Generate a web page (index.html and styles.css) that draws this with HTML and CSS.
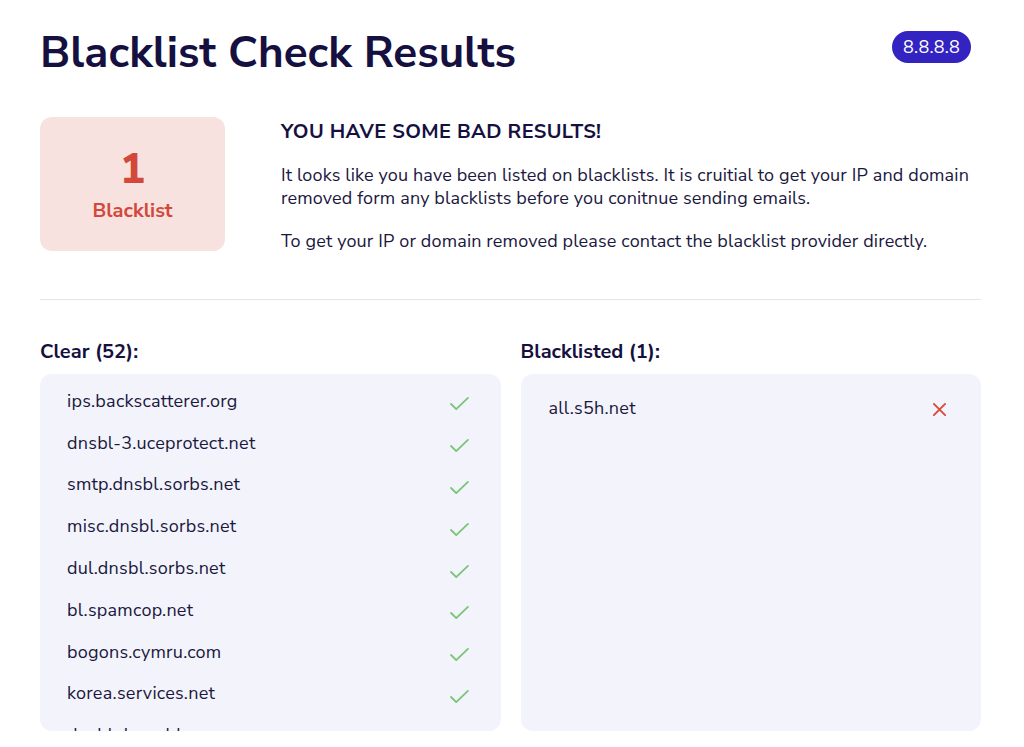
FILE: index.html
```html
<!DOCTYPE html>
<html lang="en">
<head>
<meta charset="utf-8">
<title>Blacklist Check Results</title>
<link rel="stylesheet" href="styles.css">
</head>
<body>
<div class="page">
  <header class="top">
    <h1 class="title">Blacklist Check Results</h1>
    <span class="ip-badge">8.8.8.8</span>
  </header>

  <section class="summary">
    <div class="count-box">
      <div class="count-num">1</div>
      <div class="count-label">Blacklist</div>
    </div>
    <div class="summary-text">
      <h2 class="summary-title">YOU HAVE SOME BAD RESULTS!</h2>
      <p>It looks like you have been listed on blacklists. It is cruitial to get your IP and domain removed form any blacklists before you conitnue sending emails.</p>
      <p>To get your IP or domain removed please contact the blacklist provider directly.</p>
    </div>
  </section>

  <hr class="divider">

  <section class="lists">
    <div class="col">
      <h3 class="col-title">Clear (52):</h3>
      <div class="card card-clear">
        <ul class="items">
          <li><span>ips.backscatterer.org</span><svg class="ok" viewBox="0 0 22 16"><path d="M2 8.5l5.5 5.5L20 2"/></svg></li>
          <li><span>dnsbl-3.uceprotect.net</span><svg class="ok" viewBox="0 0 22 16"><path d="M2 8.5l5.5 5.5L20 2"/></svg></li>
          <li><span>smtp.dnsbl.sorbs.net</span><svg class="ok" viewBox="0 0 22 16"><path d="M2 8.5l5.5 5.5L20 2"/></svg></li>
          <li><span>misc.dnsbl.sorbs.net</span><svg class="ok" viewBox="0 0 22 16"><path d="M2 8.5l5.5 5.5L20 2"/></svg></li>
          <li><span>dul.dnsbl.sorbs.net</span><svg class="ok" viewBox="0 0 22 16"><path d="M2 8.5l5.5 5.5L20 2"/></svg></li>
          <li><span>bl.spamcop.net</span><svg class="ok" viewBox="0 0 22 16"><path d="M2 8.5l5.5 5.5L20 2"/></svg></li>
          <li><span>bogons.cymru.com</span><svg class="ok" viewBox="0 0 22 16"><path d="M2 8.5l5.5 5.5L20 2"/></svg></li>
          <li><span>korea.services.net</span><svg class="ok" viewBox="0 0 22 16"><path d="M2 8.5l5.5 5.5L20 2"/></svg></li>
          <li><span>dnsbl.dronebl.org</span><svg class="ok" viewBox="0 0 22 16"><path d="M2 8.5l5.5 5.5L20 2"/></svg></li>
        </ul>
      </div>
    </div>
    <div class="col">
      <h3 class="col-title">Blacklisted (1):</h3>
      <div class="card card-bad">
        <ul class="items">
          <li><span>all.s5h.net</span><svg class="bad" viewBox="0 0 16 16"><path d="M2 2l12 12M14 2L2 14"/></svg></li>
        </ul>
      </div>
    </div>
  </section>
</div>
</body>
</html>
```

FILE: styles.css
```css
* { box-sizing: border-box; }
html, body { margin: 0; padding: 0; background: #ffffff; }
body {
  font-family: "Nunito Sans", Lato, "Open Sans", sans-serif;
  color: #1b1840;
}
.page {
  width: 941px;
  margin-left: 40px;
  padding-top: 28px;
}
.top {
  display: flex;
  justify-content: space-between;
  align-items: flex-start;
}
.title {
  margin: 0;
  font-size: 44px;
  line-height: 50px;
  font-weight: 700;
  color: #151040;
}
.ip-badge {
  margin-top: 3px;
  margin-right: 10px;
  background: #3323c0;
  color: #ffffff;
  font-size: 18px;
  line-height: 32px;
  height: 32px;
  padding: 0 11px;
  border-radius: 16px;
  letter-spacing: 0.2px;
}
.summary {
  display: flex;
  gap: 56px;
  margin-top: 39px;
}
.count-box {
  flex: 0 0 185px;
  height: 134px;
  padding-top: 4px;
  background: #f8e2df;
  border-radius: 12px;
  display: flex;
  flex-direction: column;
  align-items: center;
  justify-content: center;
  color: #d2483b;
  font-weight: 700;
}
.count-num {
  font-size: 42px;
  line-height: 40px;
  font-weight: 800;
}
.count-label {
  margin-top: 9px;
  font-size: 20px;
  line-height: 24px;
}
.summary-text { flex: 1; }
.summary-title {
  margin: 2px 0 0;
  font-size: 20px;
  line-height: 26px;
  font-weight: 700;
  color: #151040;
  letter-spacing: 0.35px;
}
.summary-text p {
  margin: 19px 0 0;
  font-size: 18px;
  line-height: 23px;
  color: #1b1840;
  letter-spacing: 0.15px;
}
.summary-text p + p { margin-top: 20px; }
.divider {
  border: 0;
  border-top: 1px solid #e4e4ea;
  margin: 46px 0 0;
}
.lists {
  display: grid;
  grid-template-columns: 1fr 1fr;
  column-gap: 20px;
  margin-top: 40px;
}
.col-title {
  margin: 0 0 10px;
  font-size: 20px;
  line-height: 24px;
  font-weight: 700;
  color: #151040;
}
.card {
  background: #f3f4fb;
  border-radius: 12px;
  height: 357px;
  overflow: hidden;
}
.card-clear { padding: 6px 31px 0 27px; }
.card-bad { padding: 13px 34px 0 28px; }
.items {
  list-style: none;
  margin: 0;
  padding: 0;
}
.items li {
  display: flex;
  align-items: center;
  justify-content: space-between;
  height: 41.8px;
  font-size: 18px;
  letter-spacing: 0.25px;
  color: #1b1840;
}
.ok {
  width: 21px;
  height: 15px;
  margin-top: 6px;
  fill: none;
  stroke: #7cc47a;
  stroke-width: 2;
  stroke-linecap: round;
  stroke-linejoin: round;
}
.bad {
  width: 15px;
  height: 15px;
  margin-top: 4px;
  fill: none;
  stroke: #d84a3c;
  stroke-width: 2;
  stroke-linecap: round;
}
```
